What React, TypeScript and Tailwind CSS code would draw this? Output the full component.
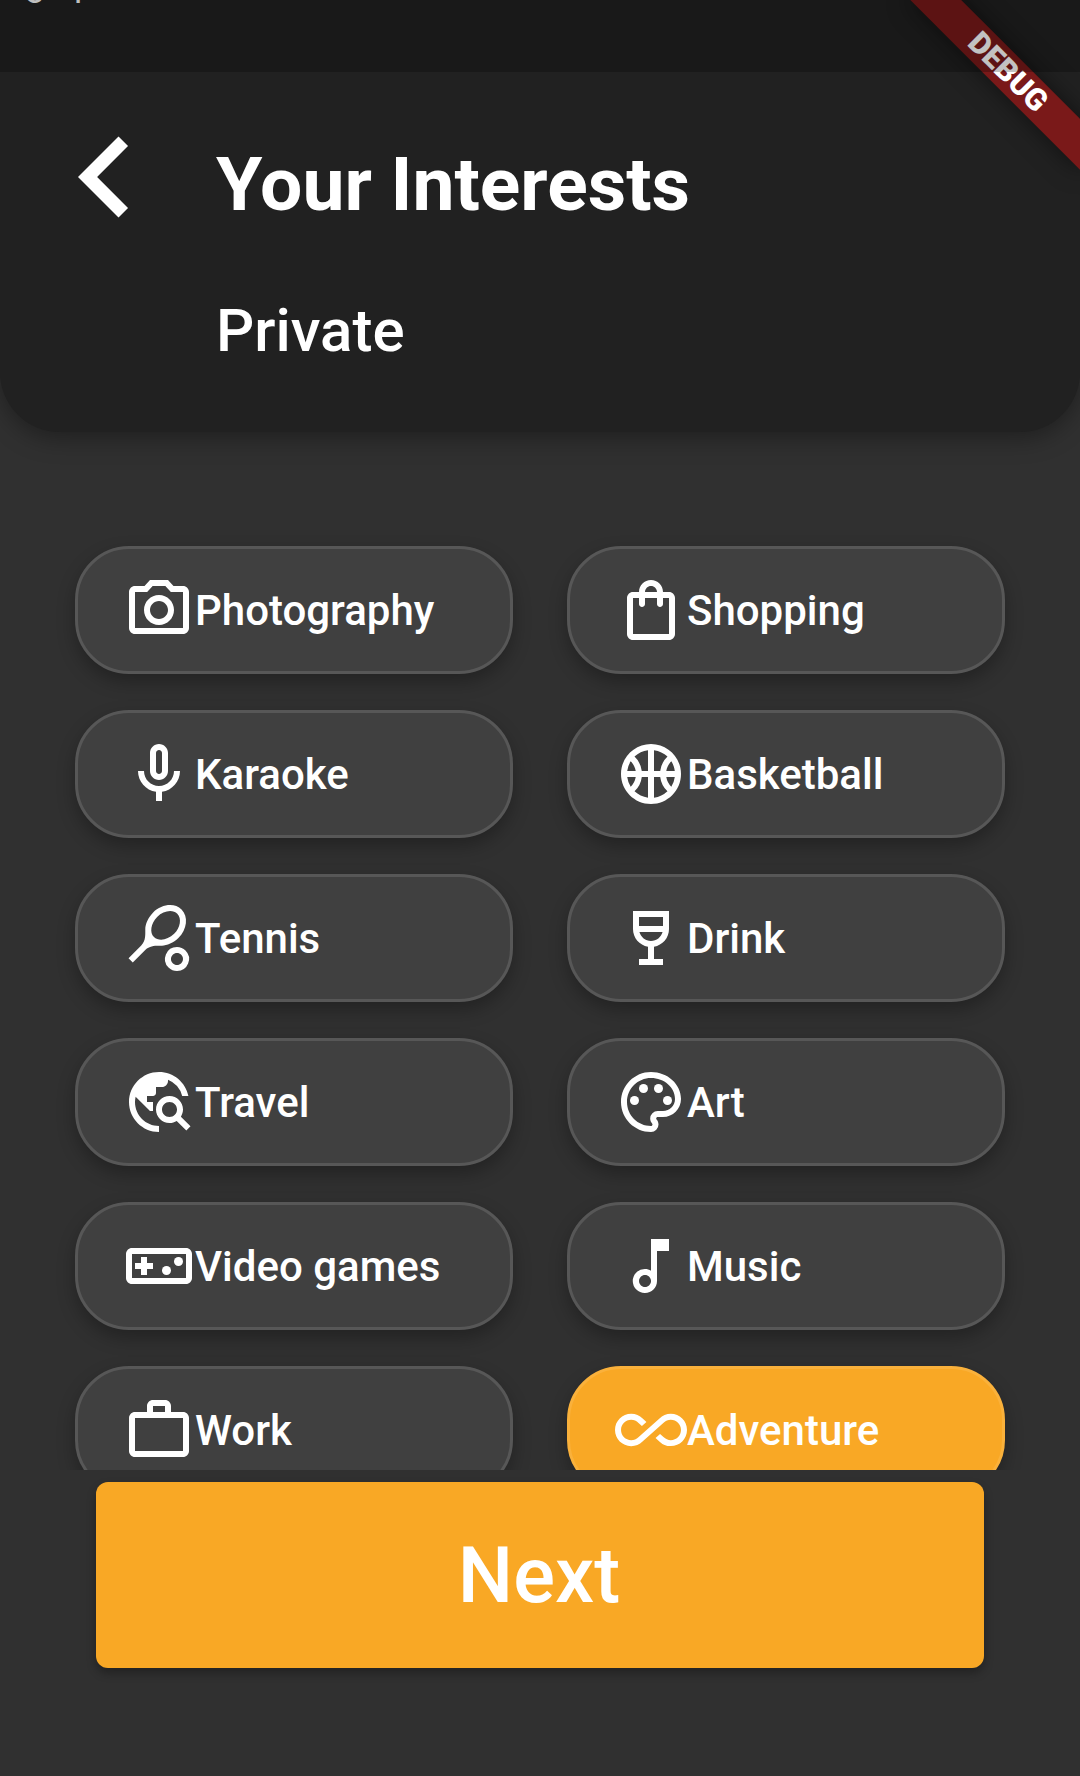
import {
  MdChevronLeft,
  MdOutlineAllInclusive,
  MdOutlineColorLens,
  MdOutlineMusicNote,
  MdOutlinePhotoCamera,
  MdOutlineShoppingBag,
  MdOutlineSportsBasketball,
  MdOutlineSportsTennis,
  MdOutlineTravelExplore,
  MdOutlineVideogameAsset,
  MdOutlineWineBar,
  MdWorkOutline,
} from 'react-icons/md';
import type { ComponentType } from 'react';

type Interest = {
  label: string;
  icon: ComponentType<{ className?: string }>;
  selected?: boolean;
};

function MicOutline({ className }: { className?: string }) {
  return (
    <svg viewBox="0 0 24 24" fill="currentColor" className={className}>
      <path d="M12 14c1.66 0 3-1.34 3-3V5c0-1.66-1.34-3-3-3S9 3.34 9 5v6c0 1.66 1.34 3 3 3zm-1-9c0-.55.45-1 1-1s1 .45 1 1v6c0 .55-.45 1-1 1s-1-.45-1-1V5zm6 6c0 2.76-2.24 5-5 5s-5-2.24-5-5H5c0 3.53 2.61 6.43 6 6.92V21h2v-3.08c3.39-.49 6-3.39 6-6.92h-2z" />
    </svg>
  );
}

const interests: Interest[] = [
  { label: 'Photography', icon: MdOutlinePhotoCamera },
  { label: 'Shopping', icon: MdOutlineShoppingBag },
  { label: 'Karaoke', icon: MicOutline },
  { label: 'Basketball', icon: MdOutlineSportsBasketball },
  { label: 'Tennis', icon: MdOutlineSportsTennis },
  { label: 'Drink', icon: MdOutlineWineBar },
  { label: 'Travel', icon: MdOutlineTravelExplore },
  { label: 'Art', icon: MdOutlineColorLens },
  { label: 'Video games', icon: MdOutlineVideogameAsset },
  { label: 'Music', icon: MdOutlineMusicNote },
  { label: 'Work', icon: MdWorkOutline },
  { label: 'Adventure', icon: MdOutlineAllInclusive, selected: true },
];

function Chip({ label, icon: Icon, selected }: Interest) {
  return (
    <button
      className={
        'flex h-32 items-center rounded-[54px] border-[3px] pl-[45px] text-[42px] leading-[50px] font-medium shadow-[0_8px_18px_rgba(0,0,0,0.28)] ' +
        (selected ? 'border-[#fab13b] bg-[#f9a825]' : 'border-[#575757] bg-[#404040]')
      }
    >
      <Icon className="size-[72px] shrink-0" />
      <span className="pt-0.5">{label}</span>
    </button>
  );
}

export default function App() {
  return (
    <div
      className="relative flex h-[1776px] w-[1080px] flex-col overflow-hidden bg-[#303030] text-white"
      style={{ fontFamily: 'Roboto, sans-serif' }}
    >
      <header className="z-10 h-[432px] shrink-0 rounded-b-[60px] bg-[#212121] pt-24 pl-6 shadow-[0_6px_24px_rgba(0,0,0,0.35)]">
        <div className="flex">
          <MdChevronLeft className="size-[162px] shrink-0" />
          <div className="pt-11 pl-[30px]">
            <h1 className="text-[75px] leading-[88px] font-bold">Your Interests</h1>
            <p className="mt-[68px] text-[60px] leading-[70px] font-medium">Private</p>
          </div>
        </div>
      </header>

      <main className="h-[1038px] shrink-0 overflow-hidden px-[75px] pt-[114px]">
        <div className="grid grid-cols-2 gap-x-[54px] gap-y-9">
          {interests.map((item) => (
            <Chip key={item.label} {...item} />
          ))}
        </div>
      </main>

      <footer className="px-24 pt-3">
        <button className="flex h-[186px] w-full items-center justify-center rounded-xl bg-[#f9a825] pt-0.5 pr-0.5 text-[78px] leading-[92px] font-medium shadow-[0_5px_10px_rgba(0,0,0,0.3)]">
          Next
        </button>
      </footer>

      {/* Corner ribbon: a strip rotated about the top right corner */}
      <div className="absolute top-0 left-[1080px] z-20 size-0 rotate-45">
        <div className="absolute top-[84px] left-[-120px] flex h-9 w-60 items-center justify-center bg-[#7a1919] text-[30.6px] leading-none font-black shadow-[0_0_24px_rgba(0,0,0,0.5)]">
          DEBUG
        </div>
      </div>

      {/* System status bar scrim */}
      <div className="absolute inset-x-0 top-0 z-30 h-[72px] overflow-hidden bg-black/24">
        <div className="mt-[-35px] flex pl-[25px] text-[36px] leading-[36px] text-[#bfbfbf]">
          <span className="w-[49px]">g</span>
          <span>p</span>
        </div>
      </div>
    </div>
  );
}
